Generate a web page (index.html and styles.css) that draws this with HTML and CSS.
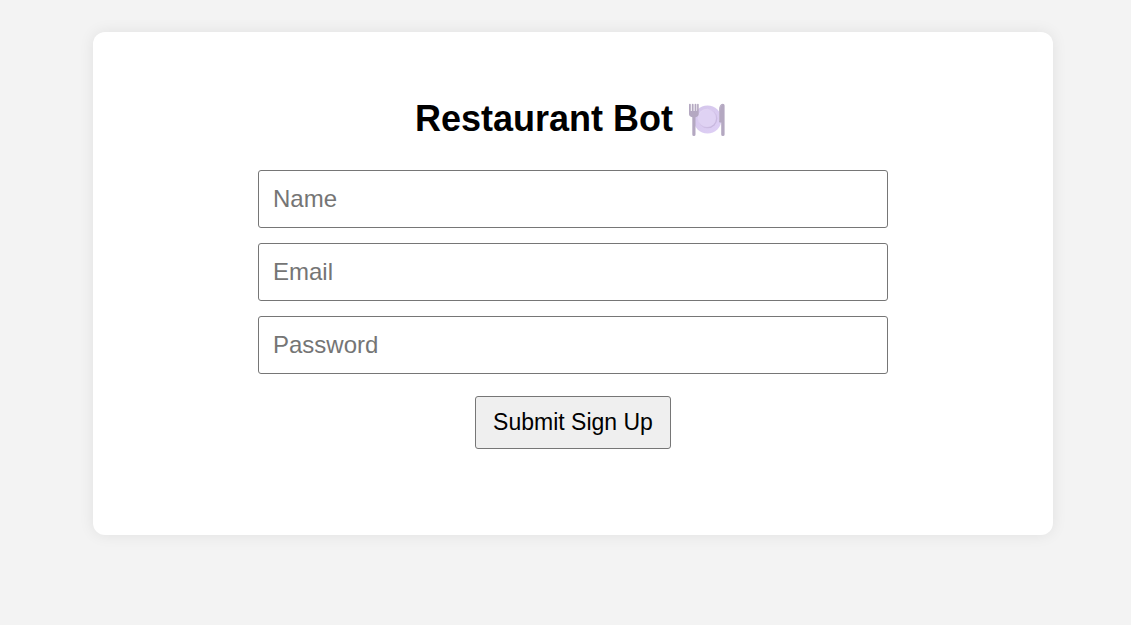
FILE: index.html
```
<!DOCTYPE html>
<html lang="en">
<head>
<meta charset="utf-8">
<meta name="viewport" content="width=device-width, initial-scale=1">
<title>Restaurant Bot</title>
<link rel="stylesheet" href="styles.css">
</head>
<body>
<main class="card">
  <h1 class="title">Restaurant Bot
    <svg class="title-icon" viewBox="0 0 36 36" role="img" aria-label="Plate with fork and knife">
      <defs>
        <linearGradient id="plate" x1="0" y1="0" x2="1" y2="1">
          <stop offset="0" stop-color="#d3c5ea"/>
          <stop offset="1" stop-color="#dfd0f6"/>
        </linearGradient>
        <linearGradient id="rim" x1="0" y1="0" x2="1" y2="1">
          <stop offset="0" stop-color="#ece2fa"/>
          <stop offset=".5" stop-color="#d5c5ea"/>
          <stop offset="1" stop-color="#c2b1d9"/>
        </linearGradient>
      </defs>
      <circle cx="18.500" cy="18.500" r="14" fill="url(#plate)"/>
      <circle cx="18.500" cy="17.500" r="9.800" fill="url(#rim)"/>
      <circle cx="18.200" cy="17.200" r="8.800" fill="#dfd2f3"/>
      <path d="M0 3.500q0-.8.9-.8t.9.800V10h1V3.500q0-.8.900-.8t.9.800V10h1V3.500q0-.8.9-.8t.9.800V10h.7V3.500q0-.8.8-.8t.8.800V13q0 2.500-3.200 3.300V33.500q0 1.500-1.600 1.500t-1.600-1.500V16.300Q0 15.500 0 13z" fill="#b4a8c1"/>
      <path d="M35.600 4.500V33.500q0 1.500-1.700 1.500t-1.700-1.500V21.500H31q-1 0-1-1.500V10q0-7 3.800-7.300 1.800 0 1.800 1.800z" fill="#b4a8c1"/>
      <path d="M30.500 20V10q0-5 2.500-6.500" stroke="#c2b7cd" stroke-width=".8" fill="none"/>
    </svg>
  </h1>
  <form class="signup">
    <input class="field" type="text" name="name" placeholder="Name" aria-label="Name">
    <input class="field" type="email" name="email" placeholder="Email" aria-label="Email">
    <input class="field" type="password" name="password" placeholder="Password" aria-label="Password">
    <button class="submit" type="submit">Submit Sign Up</button>
  </form>
</main>
</body>
</html>
```
FILE: styles.css
```
* {
  box-sizing: border-box;
}

body {
  margin: 0;
  padding: 32px 0 32px 15px;
  background: #f3f3f3;
  font-family: Arial, "Liberation Sans", sans-serif;
}

.card {
  max-width: 960px;
  margin: 0 auto;
  padding: 66px 24px 86px;
  background: #fff;
  border-radius: 12px;
  box-shadow: 0 0 15px rgba(0, 0, 0, 0.08);
}

.title {
  display: flex;
  justify-content: center;
  align-items: center;
  gap: 16px;
  margin: 0 0 30px;
  padding-right: 6px;
  font-size: 36px;
  line-height: 42px;
  color: #000;
}

.title-icon {
  width: 36px;
  height: 36px;
}

.signup {
  display: flex;
  flex-direction: column;
  align-items: center;
  gap: 15px;
}

.field {
  width: 100%;
  max-width: 630px;
  height: 58px;
  padding: 0 14px;
  border: 1px solid #767676;
  border-radius: 3px;
  background: #fff;
  font: 24px Arial, "Liberation Sans", sans-serif;
}

.field::placeholder {
  color: #757575;
}

.submit {
  height: 53px;
  margin-top: 7px;
  padding: 0 17px;
  border: 1px solid #767676;
  border-radius: 3px;
  background: #efefef;
  color: #000;
  font: 23px Arial, "Liberation Sans", sans-serif;
}
```
